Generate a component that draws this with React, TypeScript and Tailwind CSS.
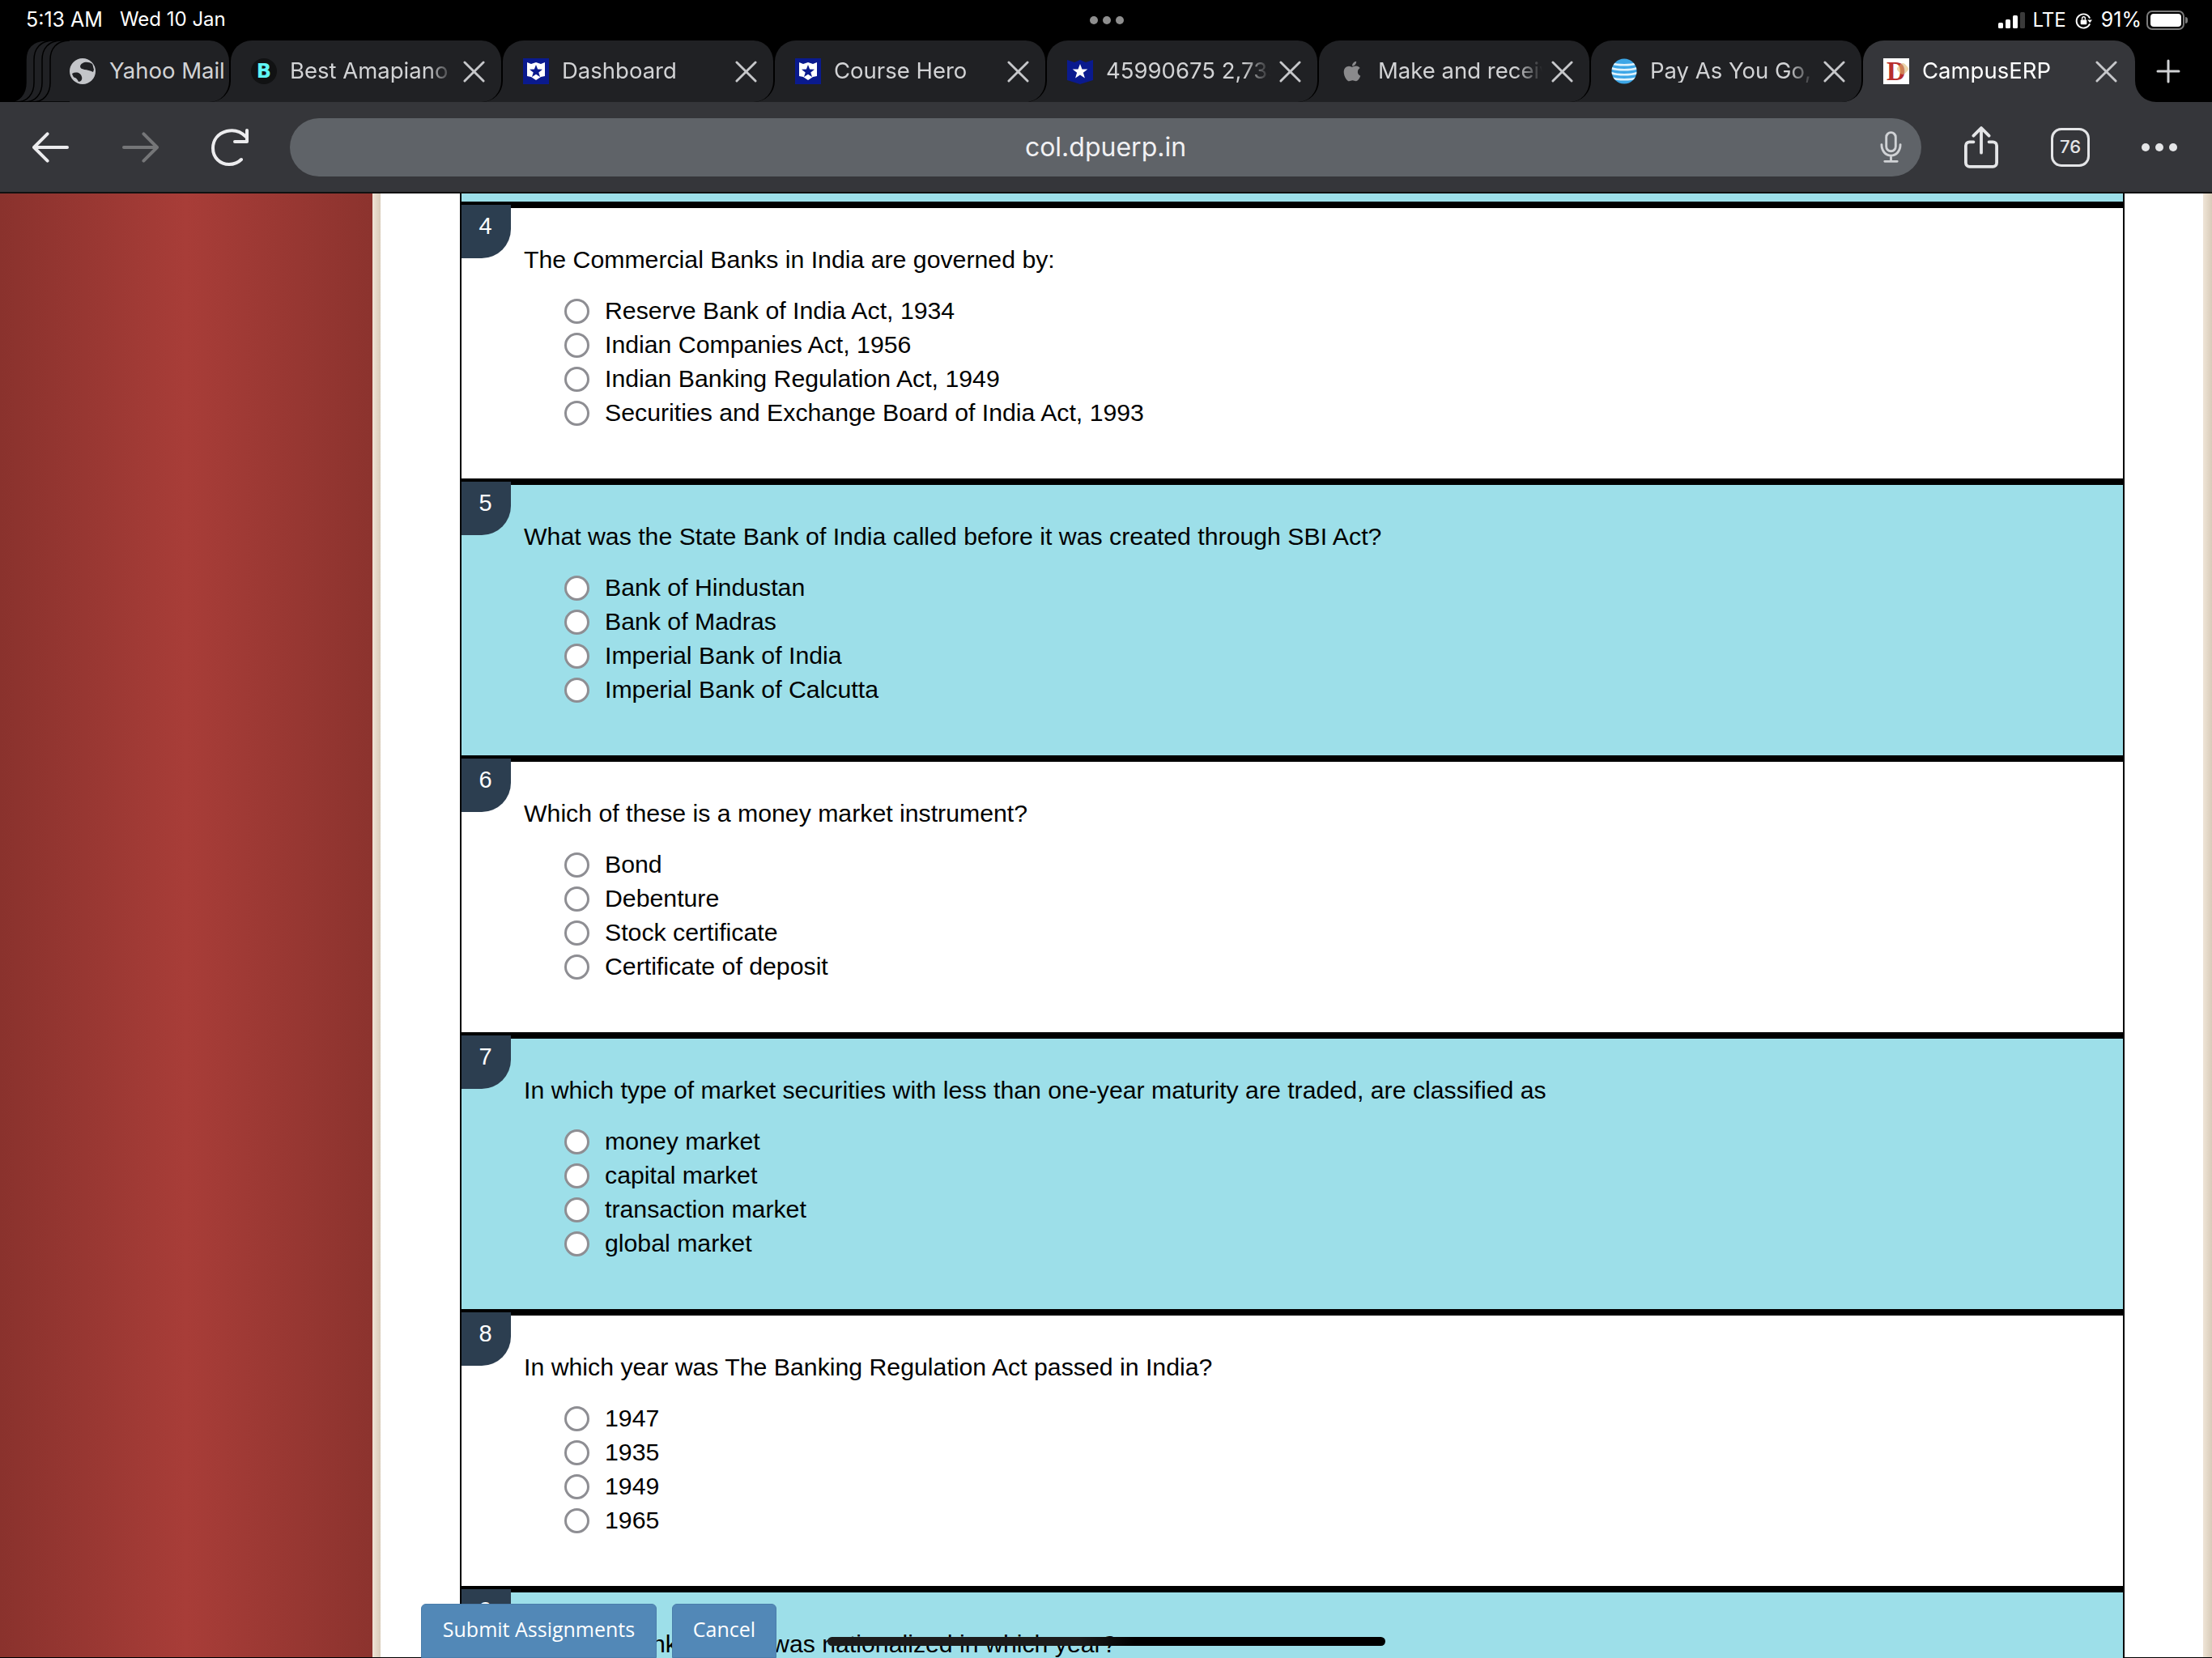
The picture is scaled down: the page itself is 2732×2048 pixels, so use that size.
import type { ReactNode } from 'react'
import { FaApple } from 'react-icons/fa'

const CHROME_FONT = "font-['Inter','Noto_Sans',sans-serif]"

type Pregunta = { n: number; texto: string; opciones: string[] }

const PREGUNTAS: Pregunta[] = [
  { n: 4, texto: 'The Commercial Banks in India are governed by:', opciones: ['Reserve Bank of India Act, 1934', 'Indian Companies Act, 1956', 'Indian Banking Regulation Act, 1949', 'Securities and Exchange Board of India Act, 1993'] },
  { n: 5, texto: 'What was the State Bank of India called before it was created through SBI Act?', opciones: ['Bank of Hindustan', 'Bank of Madras', 'Imperial Bank of India', 'Imperial Bank of Calcutta'] },
  { n: 6, texto: 'Which of these is a money market instrument?', opciones: ['Bond', 'Debenture', 'Stock certificate', 'Certificate of deposit'] },
  { n: 7, texto: 'In which type of market securities with less than one-year maturity are traded, are classified as', opciones: ['money market', 'capital market', 'transaction market', 'global market'] },
  { n: 8, texto: 'In which year was The Banking Regulation Act passed in India?', opciones: ['1947', '1935', '1949', '1965'] },
  { n: 9, texto: 'Reserve Bank of India was nationalized in which year?', opciones: ['1947', '1949', '1950', '1951'] },
]

const GlobeIcon = () => (
  <svg viewBox="0 0 32 32" className="w-[32px] h-[32px]">
    <circle cx="16" cy="16" r="16" fill="#c3c5c9" />
    <path d="M28 7C22 3 14 5 13 10c0 5 9 3 16 7l1-3c-1-3-1-5-2-7z" fill="#202124" />
    <path d="M3 19c5-3 11-1 12 4 1 3-1 6-4 6-1-2-2-4-4-5-2 0-3-2-4-5z" fill="#202124" />
  </svg>
)

const AmapianoIcon = () => (
  <span className="flex w-[32px] h-[32px] items-center justify-center rounded-full bg-[#111213] font-['DejaVu_Sans',sans-serif] text-[24px] font-bold leading-none text-[#5ff5f5]">
    B
  </span>
)

const HeroIcon = () => (
  <svg viewBox="0 0 32 32" className="w-[32px] h-[32px]">
    <rect width="32" height="32" fill="#0a1a8e" />
    <path d="M5 5l5 2 6-2 6 2 5-2v17l-5 1-6 4-6-4-5-1z" fill="#fff" />
    <path d="M16 8l2.100 5.600 5.900.2-4.700 3.600 1.700 5.700-5-3.300-5 3.300 1.700-5.700L8 13.800l5.900-.2z" fill="#0a1a8e" />
  </svg>
)

const StarIcon = () => (
  <svg viewBox="0 0 32 32" className="w-[32px] h-[32px]">
    <path d="M0 2l9 3 7-3 7 3 9-3v25l-16 5L0 27z" fill="#0a1a8e" />
    <path d="M16 7l2.500 6.400 6.800.2-5.400 4.200 2 6.600-5.900-3.900-5.900 3.900 2-6.600-5.400-4.200 6.800-.2z" fill="#fff" />
  </svg>
)

const AppleIcon = () => <FaApple className="w-[28px] h-[28px] text-[#8a8a8c]" />

const AttIcon = () => (
  <svg viewBox="0 0 32 32" className="w-[32px] h-[32px]">
    <defs>
      <clipPath id="att"><circle cx="16" cy="16" r="15.500" /></clipPath>
    </defs>
    <g clipPath="url(#att)">
      <rect width="32" height="32" fill="#3ca6e6" />
      <path d="M0 6c8 3 24 3 32 0M0 12c8 3 24 3 32 0M0 18c8 3 24 3 32 0M0 24c8 3 24 3 32 0" stroke="#dff2fc" strokeWidth="2.600" fill="none" />
    </g>
  </svg>
)

const CampusIcon = () => (
  <span className="relative flex w-[32px] h-[32px] items-center justify-center overflow-hidden bg-white font-['Liberation_Serif',serif] text-[33px] font-bold leading-none text-[#b72d2d]">
    D
    <span className="absolute right-[2px] top-[7px] h-[12px] w-[12px] rotate-45 rounded-sm bg-[#e0b870]/60" />
  </span>
)

const CloseIcon = () => (
  <svg viewBox="0 0 28 28" className="w-[27px] h-[27px] shrink-0" fill="none" stroke="#c6c7ca" strokeWidth="3" strokeLinecap="round">
    <path d="M2 2l24 24M26 2L2 26" />
  </svg>
)

function Tab({ icon, title, activa, bajo = '#202124' }: { icon: ReactNode; title: string; activa?: boolean; bajo?: string }) {
  return (
    <div className="w-[336px] h-[76px] shrink-0" style={{ background: `linear-gradient(to bottom,#000 50%,${bajo} 50%)` }}>
      <div className={`flex h-full items-center pl-[25px] rounded-t-[26px] ${activa ? 'bg-[#35363a] text-white' : 'bg-[#202124] text-[#d2d3d5] border-r-2 border-black rounded-br-[26px]'}`}>
        <span className="flex w-[32px] h-[32px] shrink-0 items-center justify-center">{icon}</span>
        <span className="ml-[16px] w-[203px] shrink-0 overflow-hidden whitespace-nowrap text-[27.500px] leading-none [mask-image:linear-gradient(to_right,#000_84%,transparent)]">{title}</span>
        <span className="ml-[11px]"><CloseIcon /></span>
      </div>
    </div>
  )
}

function StatusBar() {
  return (
    <div className={`grid h-[50px] grid-cols-[1fr_auto_1fr] items-center bg-black pl-[32px] pr-[30px] text-[24px] text-white ${CHROME_FONT}`}>
      <div className="flex gap-[21px]">
        <span className="text-[25px]">5:13 AM</span>
        <span>Wed 10 Jan</span>
      </div>
      <div className="flex gap-[6px]">
        <span className="h-[10px] w-[10px] rounded-full bg-[#8e8e8e]" />
        <span className="h-[10px] w-[10px] rounded-full bg-[#8e8e8e]" />
        <span className="h-[10px] w-[10px] rounded-full bg-[#8e8e8e]" />
      </div>
      <div className="flex items-center justify-end">
        <svg viewBox="0 0 33 20" className="w-[33px] h-[20px]">
          <rect x="0" y="13" width="6" height="7" rx="1.500" fill="#fff" />
          <rect x="9" y="9" width="6" height="11" rx="1.500" fill="#fff" />
          <rect x="18" y="4" width="6" height="16" rx="1.500" fill="#fff" />
          <rect x="27" y="0" width="6" height="20" rx="1.500" fill="#3a3a3a" />
        </svg>
        <span className="ml-[10px]">LTE</span>
        <svg viewBox="0 0 22 22" className="ml-[11px] w-[21px] h-[21px]" fill="none">
          <path d="M19 8A9 9 0 1 0 19 15" stroke="#fff" strokeWidth="2" />
          <path d="M16 10h6l-3 4z" fill="#fff" />
          <rect x="7" y="10" width="8" height="6" rx="1" fill="#fff" />
          <path d="M9 10V8a2 2 0 0 1 4 0v2" stroke="#fff" strokeWidth="1.500" />
        </svg>
        <span className="ml-[11px] text-[25px]">91%</span>
        <div className="ml-[6px] flex items-center gap-[1px]">
          <div className="flex h-[24px] w-[47px] items-center justify-center rounded-[7px] border-2 border-[#7b7b7b]">
            <div className="h-[16px] w-[38px] rounded-[4px] bg-white" />
          </div>
          <div className="h-[8px] w-[3px] rounded-r-sm bg-[#7b7b7b]" />
        </div>
      </div>
    </div>
  )
}

function TabStrip() {
  return (
    <div className={`flex h-[76px] bg-black ${CHROME_FONT}`}>
      <svg viewBox="0 0 86 76" className="w-[86px] h-[76px] shrink-0">
        {[32, 42, 52, 62].map(v => (
          <path key={v} d={`M${v - 22} 76C${v - 8} 76 ${v} 66 ${v} 52L${v} 24C${v} 10 ${v + 8} 0 ${v + 24} 0L120 0L120 76Z`} fill="#202124" stroke="#000" strokeWidth="1.500" />
        ))}
      </svg>
      <div className="w-[199px] h-[76px] shrink-0 bg-[linear-gradient(to_bottom,#000_50%,#202124_50%)]">
        <div className="flex h-full items-center rounded-tr-[26px] rounded-br-[26px] border-r-2 border-black bg-[#202124] text-[#d2d3d5]">
          <GlobeIcon />
          <span className="ml-[17px] whitespace-nowrap text-[27.500px] leading-none">Yahoo Mail</span>
        </div>
      </div>
      <Tab icon={<AmapianoIcon />} title="Best Amapiano Songs" />
      <Tab icon={<HeroIcon />} title="Dashboard" />
      <Tab icon={<HeroIcon />} title="Course Hero" />
      <Tab icon={<StarIcon />} title="45990675 2,735" />
      <Tab icon={<AppleIcon />} title="Make and receive" />
      <Tab icon={<AttIcon />} title="Pay As You Go, AT&T" bajo="#35363a" />
      <Tab icon={<CampusIcon />} title="CampusERP" activa />
      <div className="h-[76px] flex-1 bg-[#35363a]">
        <div className="flex h-full items-center rounded-bl-[26px] bg-black pl-[26px]">
          <svg viewBox="0 0 30 30" className="w-[30px] h-[30px]" fill="none" stroke="#d0d1d3" strokeWidth="3" strokeLinecap="round">
            <path d="M15 2v26M2 15h26" />
          </svg>
        </div>
      </div>
    </div>
  )
}

function Toolbar() {
  return (
    <div className={`flex h-[113px] items-center border-b-2 border-[#111] bg-[#35363a] ${CHROME_FONT}`}>
      <svg viewBox="0 0 46 38" className="ml-[40px] w-[45px] h-[38px] shrink-0" fill="none" stroke="#ececee" strokeWidth="4" strokeLinecap="round" strokeLinejoin="round">
        <path d="M44 19H3M19 2L2 19l17 17" />
      </svg>
      <svg viewBox="0 0 46 38" className="ml-[66px] w-[45px] h-[38px] shrink-0" fill="none" stroke="#757678" strokeWidth="4" strokeLinecap="round" strokeLinejoin="round">
        <path d="M2 19h41M27 2l17 17-17 17" />
      </svg>
      <svg viewBox="0 0 46 46" className="ml-[65px] w-[46px] h-[46px] shrink-0" fill="none" stroke="#ececee" strokeWidth="4" strokeLinecap="round" strokeLinejoin="round">
        <path d="M43 10C36 3 27 1 19 3 8 6 2 14 2 24c0 12 9 20 20 20 6 0 11-2 15-6" />
        <path d="M44 2v14H29" />
      </svg>
      <div className="relative ml-[51px] flex h-[72px] w-[2015px] shrink-0 items-center justify-center rounded-full bg-[#5f6368] text-[32px] text-[#f1f1f3]">
        col.dpuerp.in
        <svg viewBox="0 0 28 40" className="absolute right-[24px] top-[16px] w-[27px] h-[39px]" fill="none" stroke="#d0d2d5" strokeWidth="3" strokeLinecap="round">
          <rect x="8" y="1.500" width="12" height="24" rx="6" />
          <path d="M2 17c0 8 5 14 12 14s12-6 12-14M14 31v7M6 38.500h16" />
        </svg>
      </div>
      <svg viewBox="0 0 44 54" className="ml-[53px] w-[42px] h-[52px] shrink-0" fill="none" stroke="#e4e5e7" strokeWidth="4" strokeLinecap="round" strokeLinejoin="round">
        <path d="M12 20H7a5 5 0 0 0-5 5v22a5 5 0 0 0 5 5h30a5 5 0 0 0 5-5V25a5 5 0 0 0-5-5h-5" />
        <path d="M22 34V3M12 12l10-10 10 10" />
      </svg>
      <div className="ml-[65px] flex h-[48px] w-[48px] shrink-0 items-center justify-center rounded-[13px] border-[3px] border-[#e4e5e7] text-[22px] font-medium text-[#e4e5e7]">76</div>
      <div className="ml-[64px] flex shrink-0 gap-[7px]">
        <span className="h-[10px] w-[10px] rounded-full bg-[#e4e5e7]" />
        <span className="h-[10px] w-[10px] rounded-full bg-[#e4e5e7]" />
        <span className="h-[10px] w-[10px] rounded-full bg-[#e4e5e7]" />
      </div>
    </div>
  )
}

function QuestionRow({ p, cyan }: { p: Pregunta; cyan: boolean }) {
  return (
    <div className={`relative h-[342px] shrink-0 border-t-8 border-black pl-[77px] text-[30.250px] leading-[42px] text-black ${cyan ? 'bg-[#9ddfe9]' : 'bg-white'}`}>
      <div className="absolute -top-[4px] left-0 h-[66px] w-[61px] rounded-br-[36px] bg-[#2c3e50] pt-[9px] pr-[2px] text-center text-[29px] leading-[34px] text-white">{p.n}</div>
      <p className="pt-[43px]">{p.texto}</p>
      <div className="mt-[21px] flex flex-col pl-[50px]">
        {p.opciones.map(o => (
          <label key={o} className="flex h-[42px] items-center gap-[19px] whitespace-nowrap">
            <input type="radio" name={`p${p.n}`} className="h-[31px] w-[31px] appearance-none rounded-full border-[3px] border-[#8e8e93] bg-white" />
            {o}
          </label>
        ))}
      </div>
    </div>
  )
}

export default function App() {
  return (
    <div className="relative flex h-[2048px] w-[2732px] flex-col overflow-hidden bg-white font-['Liberation_Sans',Arial,sans-serif]">
      <StatusBar />
      <TabStrip />
      <Toolbar />
      <div className="flex min-h-0 flex-1 border-b border-black">
        <div className="w-[460px] shrink-0 bg-[linear-gradient(to_right,#8a322d,#a83d38_50%,#8c332e)]" />
        <div className="w-[10px] shrink-0 bg-[linear-gradient(to_right,#efe4d6,#d8cbb9)]" />
        <div className="w-[98px] shrink-0 bg-white" />
        <div className="flex w-[2056px] shrink-0 flex-col border-x-2 border-black">
          <div className="h-[10px] shrink-0 bg-[#9ddfe9]" />
          {PREGUNTAS.map((p, i) => <QuestionRow key={p.n} p={p} cyan={i % 2 === 1} />)}
        </div>
        <div className="flex-1 bg-white" />
        <div className="w-[11px] shrink-0 bg-[linear-gradient(to_right,#efe4d6,#d8cbb9)]" />
      </div>

      {/* botones fijos abajo */}
      <div className="absolute bottom-0 left-[520px] flex gap-[19px] font-['Open_Sans',sans-serif] text-[25px] text-white">
        <button className="h-[67px] w-[291px] rounded-t-[6px] border border-[#4a7dab] bg-[#5288b7] pb-[3px]">Submit Assignments</button>
        <button className="h-[67px] w-[129px] rounded-t-[6px] border border-[#4a7dab] bg-[#5288b7] pb-[3px]">Cancel</button>
      </div>
      <div className="absolute left-[1022px] top-[2022px] h-[11px] w-[689px] rounded-full bg-[linear-gradient(to_right,#1c1c1c_45%,#000_55%)]" />
    </div>
  )
}
